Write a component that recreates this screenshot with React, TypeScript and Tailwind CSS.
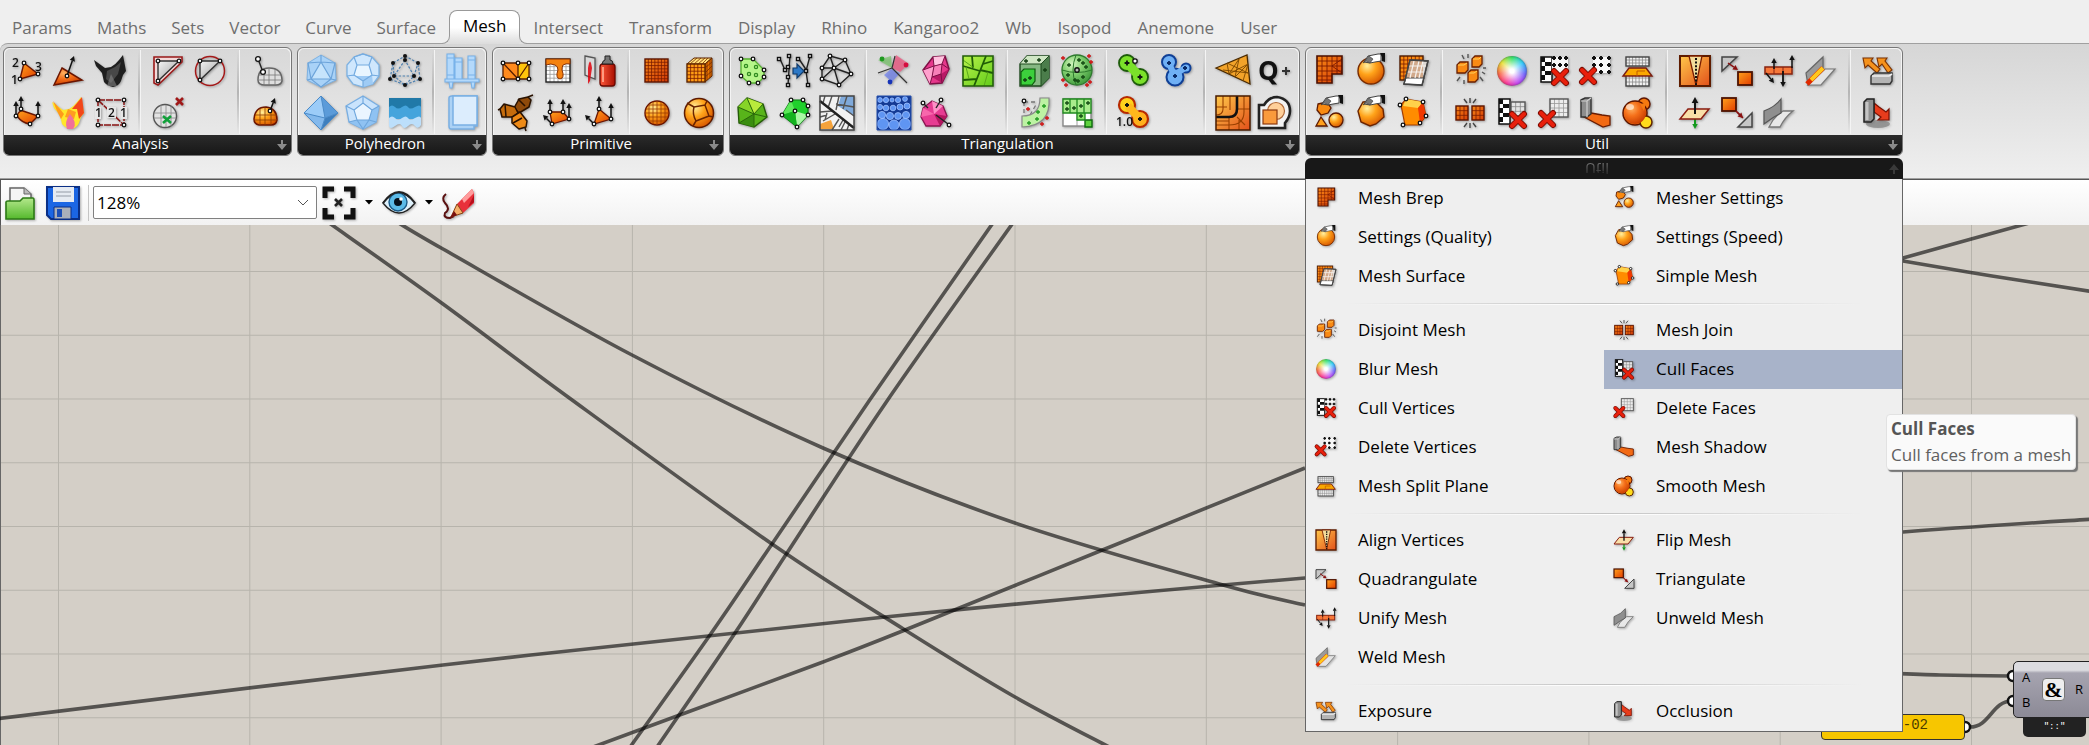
import { useState, type ReactNode } from 'react'

const TABS = [
  'Params', 'Maths', 'Sets', 'Vector', 'Curve', 'Surface', 'Mesh', 'Intersect', 'Transform',
  'Display', 'Rhino', 'Kangaroo2', 'Wb', 'Isopod', 'Anemone', 'User',
]

// ---- icon helpers, everything is drawn in a 36x36 box ----

const pts = (s: string) => s.split(' ').map((p) => p.split(',').map(Number))

function Nodes({ at, r = 1.8 }: { at: string; r?: number }) {
  return (
    <g fill="#fff" stroke="#111" strokeWidth="1.3">
      {pts(at).map(([x, y], i) => <circle key={i} cx={x} cy={y} r={r} />)}
    </g>
  )
}

function Arrow({ at, c = '#111', w = 1.5, h = 5 }: { at: string; c?: string; w?: number; h?: number }) {
  const [[x1, y1], [x2, y2]] = pts(at)
  const len = Math.hypot(x2 - x1, y2 - y1)
  const ux = (x2 - x1) / len
  const uy = (y2 - y1) / len
  const bx = x2 - ux * h
  const by = y2 - uy * h
  const k = h * 0.55
  return (
    <g>
      <path d={`M${x1} ${y1}L${bx} ${by}`} stroke={c} strokeWidth={w} />
      <path d={`M${x2} ${y2}L${bx - uy * k} ${by + ux * k}L${bx + uy * k} ${by - ux * k}Z`} fill={c} />
    </g>
  )
}

function Grid({ x, y, w, h, n, m = n, c = '#7a1c00', f = 'none', b = c, sw = 0.8 }: {
  x: number; y: number; w: number; h: number; n: number; m?: number; c?: string; f?: string; b?: string; sw?: number
}) {
  let d = ''
  for (let i = 1; i < n; i++) d += `M${x + (w * i) / n} ${y}v${h}`
  for (let i = 1; i < m; i++) d += `M${x} ${y + (h * i) / m}h${w}`
  return (
    <g>
      <rect x={x} y={y} width={w} height={h} fill={f} />
      <path d={d} stroke={c} strokeWidth={sw} />
      <rect x={x} y={y} width={w} height={h} fill="none" stroke={b} strokeWidth="1.4" />
    </g>
  )
}

function Plus({ at, c, s = 2, w = 1.3 }: { at: string; c: string; s?: number; w?: number }) {
  return <path d={pts(at).map(([x, y]) => `M${x - s} ${y}h${2 * s}M${x} ${y - s}v${2 * s}`).join('')} stroke={c} strokeWidth={w} />
}

function Cross({ x, y, s = 7 }: { x: number; y: number; s?: number }) {
  const d = `M${x - s} ${y - s}L${x + s} ${y + s}M${x + s} ${y - s}L${x - s} ${y + s}`
  return (
    <g strokeLinecap="round">
      <path d={d} stroke="#7d0a00" strokeWidth="6" />
      <path d={d} stroke="#e8200c" strokeWidth="4" />
    </g>
  )
}

const Hand = () => (
  <g>
    <path d="M11 9L15 3L25 1H28V8L22 9L17 10Z" fill="#fff" stroke="#444" />
    <path d="M10 10L16 3L20 6L17 10L13 8Z" fill="#777" stroke="#333" strokeWidth=".6" />
    <path d="M27 0H32V9L29 8V4Z" fill="#111" />
  </g>
)

const Checker = () => (
  <g>
    <rect x="5" y="4" width="11" height="25" fill="#fff" stroke="#111" strokeWidth="1.5" />
    <path d="M5 4h4v5h-4zM9 9h6v4h-6zM5 13h4v5h-4zM9 18h6v4h-6zM5 22h4v5h-4z" fill="#111" />
  </g>
)

const wolf = 'M1 7L3 13L9 20L11 29Q14 33 20 34Q26 33 28 28L30 22L33 18L30 2L26 7Q22 12 18 14L12 15Z'
const text = { fontFamily: 'Open Sans, sans-serif', fontWeight: 600, fontSize: 12, fill: '#111' }

const ICONS: Record<string, ReactNode> = {
  'Mesh Edges Order': <>
    <path d="M15 10L29 21L11 26Z" fill="url(#org)" stroke="#6b1500" strokeWidth="1.4" />
    <Nodes at="15,10 29,21 11,26" />
    <text x="3" y="14" {...text}>2</text><text x="26" y="18" {...text}>3</text><text x="2" y="31" {...text}>1</text>
  </>,
  'Face Normals': <>
    <path d="M11 15L31 27L3 32Z" fill="url(#ember)" stroke="#6b1500" strokeWidth="1.5" />
    <Arrow at="16,23 23,3" /><Nodes at="16,23" />
  </>,
  'Mesh Depth': <>
    <path d={wolf} fill="#1f1f1f" />
    <path d="M14 18L22 14L28 9L25 21L18 30L13 26Z" fill="#474747" />
    <path d="M18 21L24 33H14Z" fill="#8a8a8a" opacity=".55" />
  </>,
  'Vertex Normals': <>
    <path d="M8 21Q10 15 14 16L29 21L21 29Q13 28 8 21Z" fill="url(#org)" stroke="#6b1500" strokeWidth="1.4" />
    <Arrow at="7,21 7,6" /><Arrow at="12,14 12,1" /><Arrow at="29,21 29,6" />
    <Nodes at="7,21 12,14 29,21 21,29" />
  </>,
  'Mesh Heat': <>
    <path d={wolf} fill="#ffe62a" />
    <path d="M2 6L9 14L13 19L10 24L6 16Z" fill="#ff9a1a" />
    <path d="M31 2L33 18L28 24L26 14L21 14Z" fill="#f2471a" />
    <path d="M17 14L25 17L23 24L14 22Z" fill="#ff9c20" />
    <path d="M19 19Q27 28 22 34H16Q13 27 19 19Z" fill="#f0709a" />
  </>,
  'Face Boundaries': <>
    <path d="M5 5H31V30H5ZM5 5L31 30" fill="none" stroke="#8b1515" strokeWidth="1.5" strokeDasharray="7 1" />
    <path d="M2 12h6v12h-6zM14 12h9v11h-9zM28 12h6v12h-6z" fill="#e6e6e6" />
    <text x="2" y="22" {...text}>1</text><text x="15" y="22" {...text}>2</text><text x="27" y="22" {...text}>1</text>
    <Nodes at="5,5 31,5 31,30 5,30" />
  </>,
  'Face Edges': <>
    <path d="M4 4H32V9L8 32L4 30Z" fill="#f3d9d9" stroke="#9b1a1a" strokeWidth="1.6" />
    <path d="M8 8H29L8 28Z" fill="url(#gry)" stroke="#333" strokeWidth="1.4" />
    <Nodes at="8,8 29,8 8,28" />
  </>,
  'Face Circles': <>
    <path d="M8 8H28L8 27Z" fill="url(#gry)" stroke="#333" strokeWidth="1.4" />
    <circle cx="18" cy="18" r="14.5" fill="none" stroke="#a51a1a" strokeWidth="1.5" />
    <Nodes at="8,8 28,8 8,27" />
  </>,
  'Mesh Closest Point': <>
    <path d="M9 27Q9 15 20 15Q33 15 33 28Q32 32 27 32H16Q9 32 9 27Z" fill="#dedede" stroke="#666" strokeWidth="1.5" />
    <path d="M10 22H32M10 27H33M15 16V32M20 15V32M26 16V32" stroke="#777" strokeWidth=".8" />
    <path d="M9 6L14 19" stroke="#222" strokeWidth="1.4" /><Nodes at="9,6 14,19" r={2.4} />
  </>,
  'Mesh Inclusion': <>
    <circle cx="15" cy="21" r="11.5" fill="#e2e2e2" stroke="#555" strokeWidth="1.4" />
    <path d="M4 18H26M4 23H26M11 10V32M16 10V32M21 11V31" stroke="#888" strokeWidth=".8" />
    <path d="M13 21L21 28M21 21L13 28" stroke="#12a03a" strokeWidth="2.6" />
    <path d="M26 3L33 10M33 3L26 10" stroke="#a01818" strokeWidth="2.6" />
  </>,
  'Mesh Eval': <>
    <path d="M5 24Q6 12 17 12Q28 13 28 25Q27 30 22 30H10Q5 29 5 24Z" fill="url(#ball)" stroke="#6b1500" strokeWidth="1.5" />
    <path d="M6 20H28M5 25H28M11 14V30M16 12V30M22 14V30" stroke="#8a3a00" strokeWidth=".8" />
    <Arrow at="21,16 26,3" /><Nodes at="21,16" />
  </>,

  Icosahedron: <>
    <path d="M18 2L32 10L33 27L18 34L4 27L5 10Z" fill="#a9d2f7" stroke="#7db2e3" />
    <path d="M18 9L28 26H8Z" fill="#c6e4fc" />
    <path d="M18 2V9L5 10L8 26L4 27M18 9L32 10L28 26L33 27M8 26L18 34L28 26H8L18 9L28 26" fill="none" stroke="#6da4da" strokeWidth="1.2" />
  </>,
  Dodecahedron: <>
    <path d="M18 1L27 4L34 12V23L28 31L18 34L8 31L2 23V12L9 4Z" fill="#cfe7fd" stroke="#7db2e3" strokeWidth="1.3" />
    <path d="M12 12H24L27 22L18 28L9 22Z" fill="#e8f5ff" />
    <path d="M3 22L9 22L18 28V34L28 31L27 22L34 23" fill="#9ecbf5" />
    <path d="M12 12H24L27 22L18 28L9 22ZM12 12L9 4M24 12L27 4M27 22L34 23M18 28V34M9 22L2 23M9 4L18 1L27 4" fill="none" stroke="#74abe0" strokeWidth="1.2" />
  </>,
  'Polyhedron Vertices': <>
    <path d="M18 3L31 10L33 26L18 32L3 26L6 10ZM18 7L7 23H27ZM6 10L7 23L18 32L27 23L31 10" fill="none" stroke="#4f81b0" strokeWidth="1.2" strokeDasharray="2.5 1.5" />
    {pts('18,3 18,7 6,10 31,10 3,26 7,23 27,23 33,26 18,32').map(([x, y]) => <circle key={`${x}-${y}`} cx={x} cy={y} r="2" fill="#111" />)}
  </>,
  Octahedron: <>
    <path d="M18 1L35 18L18 35L1 18Z" fill="#9cccf8" />
    <path d="M18 1L35 18L22 23Z" fill="#5b9bd9" /><path d="M35 18L22 23L18 35Z" fill="#3f7fbd" /><path d="M1 18L22 23L18 35Z" fill="#84b9ec" />
    <path d="M18 1L22 23L18 35M1 18L22 23L35 18M18 1L35 18L18 35L1 18Z" fill="none" stroke="#4c8bc8" />
  </>,
  Polyhedron: <>
    <path d="M18 1L34 11L31 27L18 34L4 27L1 11Z" fill="#c9e3fc" stroke="#78aee2" strokeWidth="1.3" />
    <path d="M18 8L27 15L24 25H12L9 15Z" fill="#eaf5ff" />
    <path d="M12 25H24L31 27L18 34L4 27ZM27 15L34 11L31 27L24 25Z" fill="#8fc2f2" />
    <path d="M18 8L27 15L24 25H12L9 15ZM18 8V1M27 15L34 11M24 25L31 27M12 25L4 27M9 15L1 11M12 25L18 34L24 25" fill="none" stroke="#6ea6dc" strokeWidth="1.1" />
  </>,
  Waves: <>
    <path d="M2 3H34V22H2Z" fill="#2179a8" />
    <path d="M2 12Q5 9 8 12T15 12T21 12T28 12T34 12V24H2Z" fill="#45a4dc" />
    <path d="M2 23Q5 20 8 23T15 23T21 23T28 23T34 23V30Q31 35 28 31T21 31T15 31T8 31T2 31Z" fill="#bcdffb" />
  </>,
  Bookshelf: <g fill="#b4d9fb" stroke="#78b2ea" strokeWidth="1.1">
    <path d="M3 1h7v25h-7zM11 5h7v21h-7zM24 3h7v23h-7zM1 26h34v3h-34zM5 29h4l-1 6h-2zM27 29h4l-1 6h-2z" />
    <path d="M3 5h7M3 22h7M11 9h7M24 7h7M24 22h7" fill="none" />
  </g>,
  Book: <g fill="#dcedfd" stroke="#7ab0e4" strokeWidth="1.5">
    <path d="M5 3Q5 1 8 1H33V31H30V34H7Q5 34 5 31Z" fill="#acd2f5" /><path d="M9 1H33V30H9Z" />
  </g>,

  'Mesh Plane Strip': <>
    <path d="M5 10H20V26H5Z" fill="#ff8a1c" /><path d="M20 10H31V26H20Z" fill="#ffc40c" />
    <path d="M5 10H31V26H5ZM20 10V26M5 10L20 26M20 26L31 10" fill="none" stroke="#5b2000" strokeWidth="1.3" />
    <Nodes at="5,10 20,10 31,10 5,26 20,26 31,26" />
  </>,
  'Mesh Drip': <>
    <Grid x={6} y={6} w={24} h={23} n={6} f="#fff" c="#999" b="#222" />
    <path d="M6 6H30V11Q26 10 23 12Q22 14 22 17Q25 25 20 26Q15 25 18 17Q18 13 15 12Q11 10 6 12Z" fill="#f58210" stroke="#8a3000" />
  </>,
  'Mesh Spray': <>
    <path d="M3 3L13 5V26L3 22Z" fill="#d9d9d9" stroke="#555" strokeWidth="1.3" />
    <path d="M6 31V15Q8 2 10 15L8 28" fill="#e0000a" opacity=".85" />
    <rect x="18" y="11" width="15" height="22" rx="3" fill="url(#red)" stroke="#6b0800" strokeWidth="1.3" />
    <path d="M20 11Q21 7 23 7V3H28V7Q31 7 31 11Z" fill="#777" stroke="#222" />
    <path d="M21 14V29" stroke="#ff9a80" strokeWidth="2" />
  </>,
  'Mesh Plane': <Grid x={6} y={6} w={23} h={23} n={7} f="url(#deep)" b="#5e1500" />,
  'Mesh Box': <>
    <path d="M6 11L13 5H31L24 11Z" fill="#ffe07a" stroke="#5e2500" /><path d="M24 11L31 5V23L24 29Z" fill="#e77400" stroke="#5e2500" />
    <Grid x={6} y={11} w={18} h={18} n={5} f="#ff9d14" b="#5e2500" />
    <path d="M26 9V27M29 7V25M24 15L31 9M24 20L31 13M24 24L31 18M9 11L16 5M13 11L20 5M17 11L24 5M21 11L27 5" stroke="#7a2c00" strokeWidth=".8" />
  </>,
  'Mesh Pipe': <g strokeLinejoin="round" stroke="#2a1200" strokeWidth="1.5">
    <path d="M16 13L21 4L30 2L33 5L31 12L21 18Z" fill="#8f4a0a" /><path d="M2 14L6 9L17 12L20 18L15 22H4Z" fill="#c66c0c" />
    <path d="M14 22L22 17L29 26L28 32L21 34L14 28Z" fill="#ee8a16" /><path d="M30 2L35 0M2 14L0 15M27 33L28 36M20 4L27 11M7 9L8 22M15 28L24 23" />
  </g>,
  'Mesh Quad': <>
    <path d="M10 17H23L29 24L12 29Z" fill="url(#org)" stroke="#6b1500" strokeWidth="1.3" />
    <Arrow at="10,17 10,4" /><Arrow at="23,17 23,4" /><Arrow at="29,24 29,8" /><Arrow at="12,29 3,20" />
    <Nodes at="10,17 23,17 29,24 12,29" />
  </>,
  'Mesh Triangle': <>
    <path d="M17 14L29 24L12 29Z" fill="url(#org)" stroke="#6b1500" strokeWidth="1.3" />
    <Arrow at="17,14 17,1" /><Arrow at="29,24 29,8" /><Arrow at="12,29 3,20" />
    <Nodes at="17,14 29,24 12,29" />
  </>,
  'Mesh Sphere': <>
    <circle cx="18" cy="18" r="12" fill="url(#ball)" stroke="#6b1500" strokeWidth="1.4" />
    <path d="M7 14H29M6 18H30M7 22H29M10 26H26M10 10H26M14 7V29M18 6V30M22 7V29M10 10V26M26 10V26" stroke="#9a3a00" strokeWidth=".8" />
  </>,
  'Mesh Sphere Ex': <>
    <circle cx="18" cy="18" r="14.5" fill="url(#ball)" stroke="#5e1a00" strokeWidth="1.5" />
    <path d="M13 12L24 10L28 21L15 26Q11 19 13 12ZM13 12L6 8M24 10L26 6M28 21L32 22M15 26L12 31" fill="none" stroke="#6b2400" strokeWidth="1.5" />
  </>,

  'Convex Hull': <>
    <path d="M6 6H18L29 17V24L23 30H14L6 23Z" fill="#b5f58a" stroke="#55b030" strokeWidth="1.3" />
    <Nodes at="6,6 18,6 29,17 29,24 23,30 14,30 6,23" />
    <g fill="none" stroke="#2f8a20" strokeWidth="1.3">{pts('11,13 21,14 14,21 21,22').map(([x, y]) => <circle key={`${x}${y}`} cx={x} cy={y} r="1.6" />)}</g>
  </>,
  'Delaunay Edges': <>
    <path d="M3 6L8 17M13 2L11 32M8 17L12 12M22 6L30 18M33 3L29 18L31 32" stroke="#222" strokeWidth="1.4" fill="none" />
    <g fill="#fff" stroke="#111" strokeWidth="1.4">{pts('2,6 12,3 8,17 11,14 11,24 11,32 21,6 33,3 29,18 31,32').map(([x, y]) => <rect key={`${x}-${y}`} x={x - 1.5} y={y - 1.5} width="3" height="3" />)}</g>
    <path d="M16 15H20V11L27 18L20 25V21H16Z" fill="#2d79c7" stroke="#123c6b" strokeWidth="1.2" />
  </>,
  'Delaunay Mesh': <>
    <path d="M11 3L26 7L32 21L20 32L3 26V15ZM15 15L11 3M15 15L26 7M15 15L32 21M15 15L20 32M15 15L3 26M15 15H3" fill="none" stroke="#222" strokeWidth="1.4" />
    <Nodes at="11,3 26,7 32,21 20,32 3,26 3,15 15,15" />
  </>,
  'Facet Dome': <>
    <path d="M12 3L28 9L32 22L19 32L4 28L3 12Z" fill="#58b41a" stroke="#255c08" strokeWidth="1.4" />
    <path d="M12 3L28 9L19 19Z" fill="#b9ea3c" /><path d="M3 12L12 3L19 19Z" fill="#86d428" /><path d="M4 28L19 19V32Z" fill="#3a8d10" />
    <path d="M12 3L19 19L28 9M3 12L19 19L32 22M4 28L19 19V32" fill="none" stroke="#2a660a" />
  </>,
  'Octree Gem': <>
    <path d="M14 5H26L31 11V20L20 32L5 20Z" fill="#20d02c" stroke="#0a7a12" strokeWidth="1.2" />
    <path d="M18 16L31 20L20 32Z" fill="#a9f7a4" /><path d="M18 16L14 5L5 20Z" fill="#5de85a" /><path d="M18 16L5 20L20 32Z" fill="#14b31f" />
    <Nodes at="14,5 26,5 31,11 31,20 20,32 5,20 18,16" />
  </>,
  'Voronoi Map': <>
    <path d="M1 1H35V35H1Z" fill="#f2f2f2" />
    <path d="M22 1H35V21L19 11Z" fill="#7fa9da" /><path d="M1 29L12 25L15 34H1Z" fill="#f5a23a" />
    <path d="M1 6L35 33M13 1L9 13M1 17L13 16M4 26L16 19M13 35L20 24M22 35L26 27M27 15L35 21M20 1L17 15M28 1L24 14M17 9L35 12M6 1L4 8M8 18L6 25M24 25L20 32M30 29L28 35M1 22L8 20" stroke="#555" strokeWidth="1.4" />
    <path d="M1 6L35 33" stroke="#222" strokeWidth="2.4" /><path d="M1 1H35V35H1Z" fill="none" stroke="#444" strokeWidth="1.5" />
  </>,
  'Proximity Star': <>
    <path d="M16 15L2 7L15 3Z" fill="#77c86a" opacity=".7" /><path d="M16 15L20 2L33 11L24 19Z" fill="#f25580" opacity=".75" /><path d="M15 16L24 20L16 29L8 22Z" fill="#6a7cf0" opacity=".7" />
    <path d="M16 15L2 20M16 15L31 30M16 15L19 3" stroke="#333" strokeWidth="1.2" />
    <circle cx="6" cy="6" r="2.4" fill="#1f9a1f" /><circle cx="30" cy="12" r="2.4" fill="#d40d3f" /><circle cx="14" cy="29" r="2.4" fill="#1734b8" />
  </>,
  'Voronoi Gem': <>
    <path d="M15 4L27 3L31 16L24 30L12 31L5 17Z" fill="#e6388c" stroke="#7d1045" strokeWidth="1.5" />
    <path d="M15 4L27 3L24 11L16 13Z" fill="#ffc4e0" /><path d="M16 13L24 11L23 21L14 24Z" fill="#f77fb8" /><path d="M5 17L16 13L14 24L12 31Z" fill="#ffa0cd" /><path d="M23 21L31 16L24 30L14 24Z" fill="#b81a66" />
    <path d="M15 4L16 13L5 17M16 13L24 11L27 3M24 11L31 16M24 11L23 21L24 30M23 21L14 24L12 31M14 24L16 13" fill="none" stroke="#7d1045" />
  </>,
  'Voronoi Leaf': <>
    <path d="M3 3H33V33H3Z" fill="url(#leaf)" />
    <path d="M26 3L14 33M3 13L20 18M20 17L33 20M23 11L33 8M3 27L17 26M12 3L13 15" fill="none" stroke="#1f5c06" strokeWidth="1.8" />
    <path d="M3 7L14 15M28 19L24 33M6 14L9 26" stroke="#5aa81c" /><path d="M3 3H33V33H3Z" fill="none" stroke="#235f0a" strokeWidth="1.6" />
  </>,
  'Voronoi Cells': <>
    <path d="M1 1H35V35H1Z" fill="#143a94" />
    <g fill="#5f95f2" stroke="#9fc2ff" strokeWidth=".8">
      {pts('7,29,5.6 18,30,5 29,29,5.6 6,20,3.6 14,21,3.6 22,21,3.4 30,20,3.6 4,12,2.6 10,13,2.8 17,13,2.8 24,12,3 31,11,3 4,5,2.4 10,5,2.6 16,5,2 22,5,2.6 29,4,2.4').map(([x, y, r]) => <circle key={`${x}-${y}`} cx={x} cy={y} r={r} />)}
    </g>
    <path d="M1 1H35V35H1Z" fill="none" stroke="#2450b0" />
  </>,
  'Voronoi Pins': <>
    <path d="M14 6L25 11L29 21L22 31L8 31L3 22L5 13Z" fill="#e63c92" stroke="#8a1450" strokeWidth="1.3" />
    <path d="M14 6L25 11L16 19Z" fill="#ff8fc6" /><path d="M16 19L29 21L22 31Z" fill="#b3175f" /><path d="M5 13L16 19L3 22Z" fill="#f767ac" />
    <path d="M5 8L10 13M23 5L18 13M18 20L30 29" stroke="#222" strokeWidth="1.4" /><Nodes at="5,8 23,5 31,30" />
  </>,
  OcTree: <>
    <path d="M3 11L10 3H32V25L24 33H3Z" fill="#86b883" stroke="#1f4a1f" strokeWidth="1.4" />
    <path d="M3 11L10 3H32L24 11Z" fill="#cfe6c4" /><path d="M24 11L32 3V25L24 33Z" fill="#4b7d4b" /><path d="M24 11L32 3M24 11V33M3 11H24" stroke="#1f4a1f" />
    <path d="M4 19L7 16H18V28L15 32H4Z" fill="#3cd03c" stroke="#0d5c0d" strokeWidth="1.2" />
    <Plus at="8,27 13,25 9,8 22,7 28,17" c="#123c12" />
  </>,
  Proximity3D: <>
    <circle cx="18" cy="17" r="15" fill="url(#grn)" stroke="#2d7a2d" strokeWidth="1.3" />
    <path d="M17 2Q11 17 17 32M3 17Q18 22 33 17" fill="none" stroke="#2d7a2d" />
    <Plus at="10,12 9,22 16,27 24,24 27,14 20,7 24,10 19,28" c="#134a13" /><Plus at="4,5 30,3 32,9 4,27 31,29 28,32 7,32" c="#d01212" />
    <circle cx="18" cy="17" r="2.2" fill="#bbb" stroke="#111" strokeWidth="1.4" />
  </>,
  Proximity2D: <>
    <path d="M7 7H20M7 7V22M13 20L20 8" stroke="#777" strokeDasharray="4 3" strokeWidth="1.3" />
    <path d="M23 3H32Q34 31 5 32V21Q23 21 23 3Z" fill="#bdf2a3" stroke="#888" strokeWidth="1.2" />
    <Plus at="11,14 30,23 25,29" c="#d01212" /><Plus at="12,28 20,24 21,17 27,11" c="#1f9a1f" /><Nodes at="7,6" />
  </>,
  QuadTree: <>
    <Grid x={4} y={4} w={28} h={27} n={2} f="#fff" c="#888" b="#888" />
    <path d="M4 4H32V18H4Z" fill="#a9eb8c" /><path d="M18 18H26V25H18Z" fill="#8be36a" /><path d="M26 25H33V32H26Z" fill="#5fd33f" stroke="#0d6b0d" strokeWidth="1.4" />
    <path d="M4 4H32V18H4ZM18 4V25H26V18M11 4V18M25 4V18" fill="none" stroke="#1f8a1f" strokeWidth="1.3" />
    <Plus at="8,8 8,14 15,13 22,11 29,8 22,21" c="#134a13" />
  </>,
  'MetaBall Green': <>
    <g fill="#7be02a" stroke="#1d5c0a" strokeWidth="1.8"><circle cx="11" cy="10" r="8" /><circle cx="24" cy="24" r="8" /></g>
    <path d="M12 11L23 23" stroke="#7be02a" strokeWidth="9" /><Plus at="11,10 24,24" c="#111" s={2.4} w={1.8} /><Nodes at="19,8" r={2.2} />
  </>,
  'MetaBall Blue': <>
    <g fill="#6fb0f5" stroke="#0f3f96" strokeWidth="2"><circle cx="11" cy="9" r="7" /><circle cx="28" cy="15" r="4.5" /><circle cx="17" cy="24" r="8.5" /></g>
    <path d="M11 10L16 22L27 15" fill="none" stroke="#6fb0f5" strokeWidth="6" /><Plus at="11,10 17,23 27,15" c="#0a2a66" w={1.8} />
  </>,
  'MetaBall Orange': <>
    <g stroke="#b82a00" strokeWidth="2.2"><circle cx="11" cy="10" r="8" fill="#ffd21c" /><circle cx="24" cy="24" r="8" fill="#ffb01c" /></g>
    <path d="M12 11L23 23" stroke="#ffb81c" strokeWidth="8" /><Plus at="11,10 24,24" c="#111" w={1.8} /><text x="0" y="31" {...text}>1.0</text>
  </>,
  'Substrate Triangle': <>
    <path d="M1 15L32 2L35 31Z" fill="#f2a32a" stroke="#4a2a00" strokeWidth="1.3" />
    <path d="M12 10L14 21L24 6L20 24L33 11L28 28M8 17L34 20M12 10L33 20M14 21L33 11" fill="none" stroke="#7a4600" strokeWidth=".9" />
  </>,
  'Quad Plus': <>
    <text x="1" y="27" fontFamily="Open Sans, sans-serif" fontWeight="700" fontSize="26" fill="#111">Q</text><Plus at="29,18" c="#333" s={4} w={2} />
  </>,
  'Quad Curve': <>
    <path d="M1 1H35V35H1Z" fill="url(#quad)" /><path d="M8 1V14Q8 20 1 20M15 1V15M29 1V17Q29 30 14 30H1M1 12H12M14 22V35M22 22L30 30M1 26H14M22 14H35M24 25V35" fill="none" stroke="#9a4000" strokeWidth="1.1" />
    <path d="M22 1V14Q22 22 14 22H1" fill="none" stroke="#111" strokeWidth="2.6" /><path d="M1 1H35V35H1Z" fill="none" stroke="#4a1c00" strokeWidth="1.5" />
  </>,
  'Shape Hull': <>
    <path d="M2 10H7Q12 2 20 2Q33 4 33 16Q33 22 28 28V33H2Z" fill="#f2f2f2" stroke="#222" strokeWidth="2.6" />
    <circle cx="19" cy="16" r="8.5" fill="#ffd09a" stroke="#b06a3a" strokeWidth="1.2" /><rect x="6" y="15" width="14" height="14" fill="#f99a3c" stroke="#8a3a10" strokeWidth="1.2" />
  </>,

  'Mesh Brep': <>
    <path d="M6 3H31V21H21V30H6Z" fill="url(#deep)" /><path d="M11 3V30M16 3V30M21 3V21M26 3V21M6 8H31M6 13H31M6 18H31M6 23H21M6 27H21M21 13L31 6M21 13L31 20" stroke="#7a1800" strokeWidth=".9" />
    <path d="M6 3H31V21H21V30H6Z" fill="none" stroke="#4e1000" strokeWidth="1.6" />
  </>,
  'Settings (Quality)': <><circle cx="18" cy="18" r="13" fill="url(#ball)" stroke="#7a2c00" strokeWidth="1.4" /><Hand /></>,
  'Mesh Surface': <>
    <Grid x={5} y={3} w={23} h={24} n={6} f="#f98a10" b="#4e1a00" />
    <path d="M15 7L33 8L27 32L9 31Z" fill="#dcd8d4" stroke="#444" strokeWidth="1.4" /><path d="M15 7H28V25H11Z" fill="#c98a5a" opacity=".6" /><path d="M11 25H29L27 32L9 31Z" fill="#fff" stroke="#444" />
    <path d="M19 8L15 25M24 8L20 25M28 8L24 25M13 13H31M12 19H30" stroke="#f6f2ee" strokeWidth="1.2" /><path d="M15 7L33 8L27 32L9 31Z" stroke="#444" strokeWidth="1.4" />
  </>,
  'Mesher Settings': <>
    <path d="M7 9L16 7L20 13L17 18L10 20L6 15Z" fill="#f98a10" stroke="#5e1a00" strokeWidth="1.3" /><path d="M10 22L16 31H5Z" fill="#ffa01c" stroke="#5e1a00" strokeWidth="1.3" />
    <circle cx="25" cy="25" r="7" fill="url(#ball)" stroke="#5e1a00" strokeWidth="1.3" /><Hand />
  </>,
  'Settings (Speed)': <><path d="M10 7L22 6L30 14L31 22L23 29L17 31L8 27L5 16Z" fill="url(#ball)" stroke="#6b2400" strokeWidth="1.4" /><Hand /></>,
  'Simple Mesh': <>
    <path d="M11 4L28 7L31 21L24 30H10L6 10Z" fill="#ff8c00" stroke="#a03c00" strokeWidth="1.2" /><path d="M11 4L28 7L23 13L8 11Z" fill="#ffd24a" /><path d="M23 13L28 7L31 21L25 28Z" fill="#f03800" />
    <Nodes at="11,4 28,7 31,21 25,28 8,30 5,10" />
  </>,
  'Disjoint Mesh': <>
    <g fill="#f98a14" stroke="#6b2000" strokeWidth="1.3"><path d="M20 6L23 3H30V11L27 14H20ZM5 12L8 9H16V17L13 20H5ZM16 20L19 17H26V26L23 29H16Z" /></g>
    <path d="M21 6H27L29 4M6 12H12L15 10M17 20H22L25 18" stroke="#ffd25a" fill="none" /><path d="M10 2L12 6M16 1V5M31 15H34M30 19L33 21M5 28L8 24M12 31V27M28 24L31 28" stroke="#555" strokeWidth="1.4" />
  </>,
  'Mesh Join': <>
    <Grid x={4} y={11} w={12} h={14} n={3} f="url(#deep)" b="#5e1500" /><Grid x={20} y={11} w={12} h={14} n={3} f="url(#deep)" b="#5e1500" />
    <path d="M18 3V8M12 4L15 8M24 4L21 8M18 33V28M12 32L15 28M24 32L21 28" stroke="#444" strokeWidth="1.4" />
  </>,
  'Blur Mesh': <foreignObject x="3" y="3" width="30" height="30"><div className="size-full rounded-full bg-[radial-gradient(circle,#fff_10%,#ffffff00_65%),conic-gradient(#30e060,#28c8f8,#6a5cf8,#c040f0,#f83090,#f86040,#e8e030,#30e060)] shadow-[inset_0_0_2px_#555]" /></foreignObject>,
  'Cull Faces': <><Checker /><Grid x={17} y={7} w={14} h={14} n={3} f="#e4e4e4" c="#888" b="#555" /><Cross x={24} y={25} s={6} /></>,
  'Cull Vertices': <><Checker /><path d="M16 4H32V20H16Z" fill="#f6f6f6" /><Plus at="18,5 24,5 30,5 18,12 24,12 30,12 30,19 18,19" c="#111" w={2} /><Cross x={24} y={24} s={6} /></>,
  'Delete Faces': <><Grid x={14} y={4} w={18} h={18} n={4} f="#ececec" c="#999" b="#555" /><Cross x={11} y={24} s={6} /></>,
  'Delete Vertices': <><path d="M15 4H32V20H15Z" fill="#f8f8f8" /><Plus at="16,5 23,5 31,5 16,12 23,12 31,12 23,19 31,19" c="#111" w={2} /><Cross x={10} y={23} s={6} /></>,
  'Mesh Shadow': <>
    <path d="M13 18L24 20L32 21V30L25 32L6 22Z" fill="#f26a14" stroke="#6b1c00" strokeWidth="1.3" />
    <path d="M3 5L7 3H13V19L9 22H3Z" fill="#8d8d8d" stroke="#333" strokeWidth="1.4" /><path d="M3 6H9L13 3M9 6V22" fill="none" stroke="#d0d0d0" strokeWidth="1.2" />
  </>,
  'Mesh Split Plane': <>
    <Grid x={6} y={4} w={23} h={9} n={7} m={3} f="#f2f2f2" c="#888" b="#444" /><Grid x={6} y={21} w={23} h={12} n={7} m={3} f="#f2f2f2" c="#888" b="#444" />
    <path d="M9 15H26L32 23H3Z" fill="#fba800" stroke="#7a1c10" strokeWidth="1.4" /><path d="M17 23V18H25" fill="none" stroke="#c05a00" />
  </>,
  'Smooth Mesh': <>
    <g fill="#f67a10" stroke="#5e1500" strokeWidth="1.5"><circle cx="24" cy="9" r="6" /><circle cx="15" cy="18" r="12" /></g><circle cx="26" cy="27" r="6" fill="#ffdc1c" stroke="#5e2500" strokeWidth="1.5" />
    <circle cx="15" cy="18" r="11" fill="url(#ember)" /><path d="M20 9L26 8L24 16Z" fill="#f67a10" /><ellipse cx="10" cy="12" rx="4" ry="3" fill="#fff" opacity=".6" />
  </>,
  'Align Vertices': <>
    <path d="M3 3H33V33H3Z" fill="url(#quad)" stroke="#5e1c00" strokeWidth="2" /><path d="M12 3H25L19 32Z" fill="#f3dc9a" stroke="#7a1c00" strokeWidth="1.3" />
    <path d="M19 5V32" stroke="#111" strokeWidth="2" strokeDasharray="2 1.6" />
  </>,
  'Flip Mesh': <><Arrow at="18,22 18,34" c="#149a1e" w={2} h={5} /><path d="M11 14H32L24 24H3Z" fill="#f9dfa8" stroke="#8a1c10" strokeWidth="1.5" /><Arrow at="18,19 18,2" w={2} h={6} /></>,
  Quadrangulate: <>
    <path d="M3 4H18L3 18Z" fill="#c6c6c6" stroke="#444" strokeWidth="1.5" /><Arrow at="9,10 19,17" c="#8a1010" /><rect x="19" y="19" width="14" height="13" fill="url(#org)" stroke="#4e1200" strokeWidth="1.8" />
  </>,
  Triangulate: <>
    <rect x="3" y="3" width="14" height="13" fill="url(#org)" stroke="#4e1200" strokeWidth="1.8" /><path d="M17 16L24 23" stroke="#8a1010" strokeWidth="1.4" /><Arrow at="18,17 24,23" c="#8a1010" />
    <path d="M33 18V32H19Z" fill="#c6c6c6" stroke="#444" strokeWidth="1.5" />
  </>,
  'Unify Mesh': <>
    <rect x="4" y="14" width="27" height="7" fill="#f6783a" stroke="#8a2410" strokeWidth="1.5" /><path d="M13 14V21M22 14V21" stroke="#8a2410" />
    <Arrow at="13,16 13,5" /><Arrow at="31,15 31,2" /><Arrow at="22,18 22,34" w={1.8} /><Arrow at="5,20 13,30" />
  </>,
  'Weld Mesh': <>
    <path d="M3 20L20 4V16L5 32Z" fill="#9a9a9a" stroke="#666" strokeWidth="1.2" /><path d="M5 32L22 16H32L18 32Z" fill="#e4e4e4" stroke="#777" strokeWidth="1.2" />
    <path d="M4 31L20 15" stroke="#e02a00" strokeWidth="5" /><path d="M8 27L20 15" stroke="#ffc81c" strokeWidth="4" />
  </>,
  'Unweld Mesh': <>
    <path d="M12 25Q16 20 22 16H32Q24 22 19 32H8Z" fill="#e8e8e8" stroke="#777" strokeWidth="1.3" />
    <path d="M3 16Q14 12 20 4V18Q12 22 3 29Z" fill="#8f8f8f" stroke="#555" strokeWidth="1.2" />
  </>,
  Exposure: <>
    <g fill="#f5921c" stroke="#7a3000" strokeWidth="1.1"><path d="M3 5H13L11 8L20 16L17 20L8 12L5 15ZM17 5H27L25 8L32 17L28 20L22 11L19 14Z" /></g>
    <path d="M11 23L14 20H32V28L30 31H11Z" fill="#b4b4b4" stroke="#333" strokeWidth="1.4" /><path d="M12 23H29L32 21" stroke="#eee" fill="none" strokeWidth="1.6" />
  </>,
  Occlusion: <>
    <ellipse cx="18" cy="29" rx="12" ry="4" fill="#555" opacity=".45" />
    <path d="M14 8L19 12L26 17L29 14V25H18L21 22L14 17Z" fill="#e83c1c" stroke="#7a1000" strokeWidth="1.2" />
    <path d="M4 7L7 4H14V24L11 27H4Z" fill="#8f8f8f" stroke="#222" strokeWidth="1.5" /><path d="M7 7V25" stroke="#c4c4c4" strokeWidth="3" />
  </>,

  Open: <>
    <path d="M8 3H22L29 9V30H8Z" fill="#f4f4f4" stroke="#666" strokeWidth="1.5" /><path d="M22 3V9H29" fill="#bbb" stroke="#666" />
    <path d="M4 17Q4 16 6 16H18L21 13H31Q32 13 32 15V34H4Z" fill="url(#leafV)" stroke="#2c7a16" strokeWidth="1.6" />
  </>,
  Save: <>
    <path d="M2 2H34V34H6L2 30Z" fill="#1b66e4" stroke="#0a2f86" strokeWidth="2" /><path d="M8 2H29V17H8Z" fill="#e6ebf2" /><path d="M11 7H26M11 11H26" stroke="#b0b6c0" strokeWidth="1.4" />
    <path d="M9 22H26V34H9Z" fill="#aab0ba" stroke="#0a2f86" /><path d="M12 24H17V32H12Z" fill="#1b4fb8" />
  </>,
  'Zoom Extents': <>
    <path d="M4 13V4H13M23 4H32V13M32 23V32H23M13 32H4V23" fill="none" stroke="#111" strokeWidth="5" /><path d="M14 14L21 21M21 14L14 21" stroke="#222" strokeWidth="2.6" />
  </>,
  Preview: <>
    <path d="M2 18Q10 8 18 8T34 18Q26 28 18 28T2 18Z" fill="#dff1fb" stroke="#222" strokeWidth="1.4" /><circle cx="17" cy="17" r="9" fill="#5cbbe8" stroke="#1a5a86" strokeWidth="1.4" />
    <circle cx="17" cy="17" r="4" fill="#06111c" /><circle cx="20" cy="14" r="1.8" fill="#fff" /><path d="M2 18Q10 7 18 7T34 18" fill="none" stroke="#222" strokeWidth="2" />
  </>,
  Sketch: <>
    <path d="M5 9Q0 13 4 18Q10 24 4 28Q2 33 9 33L13 31" fill="none" stroke="#5a1010" strokeWidth="2" />
    <path d="M16 19L31 4L33 8V18L22 28Z" fill="#e8303a" /><path d="M21 14L31 4L33 8L23 18Z" fill="#ff9c9c" /><path d="M27 22L33 17V10Z" fill="#b80f1c" />
    <path d="M16 19L22 28L10 32Z" fill="#f5b06a" stroke="#8a4010" /><path d="M13 26L16 30L9 33Z" fill="#7a1010" />
  </>,
}

const Icon = ({ name, size = 'size-9' }: { name: string; size?: string }) => (
  <svg viewBox="0 0 36 36" fill="none" aria-hidden="true" className={`${size} overflow-visible drop-shadow-[1px_1px_1px_rgba(0,0,0,0.3)]`}>
    {ICONS[name]}
  </svg>
)

function Gradients() {
  const lin = (id: string, a: string, b: string, y = 1, x = 1) => (
    <linearGradient id={id} x1="0" y1="0" x2={x} y2={y}><stop stopColor={a} /><stop offset="1" stopColor={b} /></linearGradient>
  )
  const rad = (id: string, a: string, b: string, c: string) => (
    <radialGradient id={id} cx=".35" cy=".3" r=".75"><stop stopColor={a} /><stop offset=".45" stopColor={b} /><stop offset="1" stopColor={c} /></radialGradient>
  )
  return (
    <svg className="absolute size-0" aria-hidden="true">
      <defs>
        {lin('org', '#ffa21c', '#e23c00')}{lin('deep', '#f98a14', '#d43a08')}{lin('gry', '#f4f4f4', '#9c9c9c')}
        {lin('red', '#ff5a3c', '#a80e00', 0)}{lin('leaf', '#b8f24a', '#62cc1a')}{lin('quad', '#ffc84a', '#e2501a')}
        {lin('leafV', '#b4e88c', '#54b82c', 1, 0)}
        {rad('ball', '#fff0a0', '#ffa31a', '#d65600')}{rad('grn', '#d4f5c0', '#82cf70', '#3f9a3c')}{rad('ember', '#ffb060', '#f5701a', '#c83c00')}
      </defs>
    </svg>
  )
}

// ---- ribbon ----

// Each group is a list of columns: [top, bottom]
type Column = [string, string?]

const PANELS: { title: string; groups: Column[][] }[] = [
  {
    title: 'Analysis',
    groups: [
      [['Mesh Edges Order', 'Vertex Normals'], ['Face Normals', 'Mesh Heat'], ['Mesh Depth', 'Face Boundaries']],
      [['Face Edges', 'Mesh Inclusion'], ['Face Circles']],
      [['Mesh Closest Point', 'Mesh Eval']],
    ],
  },
  {
    title: 'Polyhedron',
    groups: [
      [['Icosahedron', 'Octahedron'], ['Dodecahedron', 'Polyhedron'], ['Polyhedron Vertices', 'Waves']],
      [['Bookshelf', 'Book']],
    ],
  },
  {
    title: 'Primitive',
    groups: [
      [['Mesh Plane Strip', 'Mesh Pipe'], ['Mesh Drip', 'Mesh Quad'], ['Mesh Spray', 'Mesh Triangle']],
      [['Mesh Plane', 'Mesh Sphere'], ['Mesh Box', 'Mesh Sphere Ex']],
    ],
  },
  {
    title: 'Triangulation',
    groups: [
      [['Convex Hull', 'Facet Dome'], ['Delaunay Edges', 'Octree Gem'], ['Delaunay Mesh', 'Voronoi Map']],
      [['Proximity Star', 'Voronoi Cells'], ['Voronoi Gem', 'Voronoi Pins'], ['Voronoi Leaf']],
      [['OcTree', 'Proximity2D'], ['Proximity3D', 'QuadTree']],
      [['MetaBall Green', 'MetaBall Orange'], ['MetaBall Blue']],
      [['Substrate Triangle', 'Quad Curve'], ['Quad Plus', 'Shape Hull']],
    ],
  },
]

const UTIL: Column[][] = [
  [['Mesh Brep', 'Mesher Settings'], ['Settings (Quality)', 'Settings (Speed)'], ['Mesh Surface', 'Simple Mesh']],
  [
    ['Disjoint Mesh', 'Mesh Join'], ['Blur Mesh', 'Cull Faces'], ['Cull Vertices', 'Delete Faces'],
    ['Delete Vertices', 'Mesh Shadow'], ['Mesh Split Plane', 'Smooth Mesh'],
  ],
  [['Align Vertices', 'Flip Mesh'], ['Quadrangulate', 'Triangulate'], ['Unify Mesh', 'Unweld Mesh'], ['Weld Mesh']],
  [['Exposure', 'Occlusion']],
]

const DownArrow = ({ className }: { className: string }) => (
  <svg viewBox="0 0 10 12" className={`h-3 w-2.5 ${className}`} aria-hidden="true">
    <path d="M4 1H6V5H10L5 11L0 5H4Z" fill="currentColor" />
  </svg>
)

function Panel({ title, groups, open, onToggle }: { title: string; groups: Column[][]; open?: boolean; onToggle?: () => void }) {
  return (
    <section className="overflow-hidden rounded-md border border-[#777] bg-linear-to-b from-[#d8d8d8] to-[#ececec]">
      <div className="flex rounded-t-md border-x border-t border-[#f4f4f4] py-px pr-0.5 pl-px">
        {groups.map((cols, g) => (
          <div key={g} className="flex">
            {g > 0 && <div className="mx-[6px] w-[3px] border-r border-[#f4f4f4] bg-linear-to-b from-transparent via-[#b5b5b5] to-transparent bg-size-[2px_100%] bg-no-repeat" />}
            {cols.map((col, i) => (
              <div key={i} className="flex w-[42px] flex-col">
                {col.map((name) => name && (
                  <button key={name} title={name} aria-label={name} className="flex size-[42px] items-center justify-center">
                    <Icon name={name} />
                  </button>
                ))}
              </div>
            ))}
          </div>
        ))}
      </div>
      <button onClick={onToggle} aria-expanded={open} className="flex h-5 w-full items-center bg-linear-to-b from-[#2b2b2b] to-[#171717] pr-1 text-[15px] leading-5 text-white">
        <span className="-mt-1 flex-1">{title}</span>
        <DownArrow className="text-[#8a8a8a]" />
      </button>
    </section>
  )
}

function MenuItem({ name, active, onHover }: { name: string; active: boolean; onHover: () => void }) {
  return (
    <div className="relative">
      <button
        role="menuitem"
        onMouseEnter={onHover}
        className={`flex h-[39px] w-full items-center gap-5 pb-px pl-2 text-left text-[17px] text-black ${active ? 'bg-[#a8b3c9]' : ''}`}
      >
        <Icon name={name} size="size-6" />
        <span>{name}</span>
      </button>
      {active && name === 'Cull Faces' && (
        <div role="tooltip" className="absolute top-[64px] left-[282px] z-10 rounded-[4px] border border-[#e2e2e2] bg-[#fafafa] px-1 py-px text-[17px] leading-[26px] whitespace-nowrap text-[#606060] shadow-[2px_2px_1px_#777]">
          <div className="font-bold text-[#555]">Cull Faces</div>
          <div>Cull faces from a mesh</div>
        </div>
      )}
    </div>
  )
}

function UtilMenu() {
  const [active, setActive] = useState('Cull Faces')
  return (
    <div className="absolute inset-x-0 top-full z-20 mt-0.5">
      <div className="flex h-[21px] items-center rounded-t-md bg-[#181818] pr-1 text-center text-[15px]">
        <span aria-hidden="true" className="flex-1 -scale-y-100 bg-linear-to-b from-[#181818] to-[#8a8a8a] bg-clip-text leading-5 text-transparent">Util</span>
        <DownArrow className="rotate-180 text-[#3a3a3a]" />
      </div>
      <div role="menu" aria-label="Util" className="border-x border-b border-[#666] bg-[#efefef]">
        {UTIL.map((rows, g) => (
          <div key={g}>
            {g > 0 && (
              <div className="mx-10 mt-[7px] mb-[6px]">
                <div className="h-px bg-linear-to-r from-transparent via-[#c4c4c4] to-transparent" />
                <div className="h-px bg-linear-to-r from-transparent via-white to-transparent" />
              </div>
            )}
            {rows.map((row) => (
              <div key={row[0]} className="grid grid-cols-2">
                {row.map((name) => name && (
                  <MenuItem key={name} name={name} active={active === name} onHover={() => setActive(name)} />
                ))}
              </div>
            ))}
          </div>
        ))}
      </div>
    </div>
  )
}

function TabStrip({ tab, onSelect }: { tab: string; onSelect: (t: string) => void }) {
  return (
    <nav role="tablist" className="flex h-[43px] items-end bg-[#efefef] text-[17px] text-[#6e6e6e]">
      {TABS.map((t) =>
        t === tab ? (
          <button
            key={t}
            role="tab"
            aria-selected="true"
            className="relative z-10 -mb-px h-[34px] rounded-t-lg border-x border-t border-[#999] bg-linear-to-b from-white from-50% to-[#dcdcdc] px-[13px] pb-1 text-black"
          >
            {t}
            <span className="absolute bottom-0 -left-2 size-2 overflow-hidden bg-[#e0e0e0]">
              <span className="block size-full rounded-br-lg border-r border-b border-[#999] bg-[#efefef]" />
            </span>
            <span className="absolute -right-2 bottom-0 size-2 overflow-hidden bg-[#e0e0e0]">
              <span className="block size-full rounded-bl-lg border-b border-l border-[#999] bg-[#efefef]" />
            </span>
          </button>
        ) : (
          <button key={t} role="tab" aria-selected="false" onClick={() => onSelect(t)} className="h-[34px] pt-1 pr-[13px] pl-3 nth-[n+8]:pl-[13px]">
            {t}
          </button>
        ),
      )}
    </nav>
  )
}

// ---- toolbar above the canvas ----

const Caret = () => (
  <svg viewBox="0 0 8 5" className="h-[5px] w-2" aria-hidden="true"><path d="M0 0H8L4 4.500Z" fill="#000" /></svg>
)

function Toolbar() {
  const [zoom, setZoom] = useState('128%')
  return (
    <div className="flex h-[46px] items-center border-t border-l border-[#555] bg-linear-to-b from-white to-[#f2f2f2] pl-px">
      <button aria-label="Open"><Icon name="Open" /></button>
      <button aria-label="Save" className="ml-[7px]"><Icon name="Save" /></button>
      <div className="mr-1 ml-[7px] h-9 w-px bg-[#c4c4c4]" />
      <div className="relative">
        <select
          aria-label="Zoom"
          value={zoom}
          onChange={(e) => setZoom(e.target.value)}
          className="h-[33px] w-[224px] appearance-none rounded-xs border border-[#808080] bg-white pl-[3px] text-[17px] text-black"
        >
          {['50%', '100%', '128%', '150%', '200%'].map((z) => <option key={z}>{z}</option>)}
        </select>
        <svg viewBox="0 0 12 7" className="pointer-events-none absolute top-[13px] right-2 h-[7px] w-3" aria-hidden="true">
          <path d="M1 1L6 6L11 1" fill="none" stroke="#555" />
        </svg>
      </div>
      <button aria-label="Zoom Extents" className="ml-1"><Icon name="Zoom Extents" /></button>
      <button aria-label="Zoom options" className="px-2"><Caret /></button>
      <button aria-label="Preview"><Icon name="Preview" /></button>
      <button aria-label="Preview options" className="px-2"><Caret /></button>
      <button aria-label="Sketch"><Icon name="Sketch" /></button>
    </div>
  )
}

// ---- canvas ----

// Smooth path through the given points
function wire(s: string) {
  const p = pts(s)
  let d = `M${p[0].join(' ')}`
  for (let i = 0; i < p.length - 1; i++) {
    const a = p[i - 1] ?? p[i]
    const b = p[i]
    const c = p[i + 1]
    const e = p[i + 2] ?? c
    d += `C${b[0] + (c[0] - a[0]) / 6} ${b[1] + (c[1] - a[1]) / 6} ${c[0] - (e[0] - b[0]) / 6} ${c[1] - (e[1] - b[1]) / 6} ${c[0]} ${c[1]}`
  }
  return d
}

const WIRES = [
  '325,-5 443,79 568,172 772,319 905,405 1015,472 1115,525',
  '394,-5 443,24 632,130 823,223 1015,298 1223,360 1305,380',
  '995,-5 869,176 772,319 710,410 628,525',
  '1015,-5 887,176 787,328 735,408 655,525',
  '-5,494 443,440 885,392 1305,353 1903,307 2095,294',
  '585,525 677,491 823,437 905,405 1100,326 1305,243',
  '1880,39 1903,33 2040,-5',
  '1880,33 1903,36 1992,51 2095,67',
  '1880,448 1940,450 2010,451',
]

function Canvas() {
  return (
    <main className="relative min-h-[400px] flex-1 overflow-hidden bg-[#d4cfc7]">
      <svg className="absolute inset-0 size-full" aria-hidden="true">
        <defs>
          <pattern id="grid" width="191.3" height="63.75" x="58" y="46" patternUnits="userSpaceOnUse">
            <path d="M0.5 0V64M0 0.5H192" stroke="#b7b4ac" />
          </pattern>
        </defs>
        <rect width="100%" height="100%" fill="url(#grid)" />
        <rect width="1" height="100%" fill="#666" />
        <g fill="none" stroke="#000" strokeOpacity=".6" strokeWidth="3.6">
          {WIRES.map((w) => <path key={w} d={wire(w)} />)}
          <path d="M1970 502C1990 502 1992 476 2012 476" />
        </g>
        <g fill="#fff" stroke="#111" strokeWidth="2.5">
          <circle cx="2013" cy="451" r="5" /><circle cx="2013" cy="476" r="5" /><circle cx="1965" cy="502" r="5" />
        </g>
      </svg>
      <div className="absolute top-[489px] left-[1821px] h-[26px] w-36 rounded-[4px] border border-[#333] bg-[#f7c600] pr-9 text-right font-['Liberation_Mono',monospace] text-[14px] leading-[20px] text-[#4a3b00]">
        -02
      </div>
      <div className="absolute top-[436px] left-[2013px] flex h-[57px] w-[84px] items-center rounded-[5px] border border-[#222] bg-linear-to-b from-[#dcdce0] from-15% via-[#a6a4b0] via-20% to-[#8c8a96] pl-2 text-[13px] text-black">
        <div className="flex w-5 flex-col leading-[25px]"><span>A</span><span>B</span></div>
        <div className="flex size-[23px] items-center justify-center rounded-[4px] border border-[#777] bg-[#eee] font-['Liberation_Serif',serif] text-[22px] leading-none font-bold">&amp;</div>
        <span className="ml-2.5">R</span>
      </div>
      <div className="absolute top-[493px] left-[2023px] h-[19px] w-[63px] rounded-b-[5px] bg-[#222] text-center font-['Liberation_Mono',monospace] text-[9px] leading-[18px] text-white">
        "::"
      </div>
    </main>
  )
}

export default function App() {
  const [tab, setTab] = useState('Mesh')
  const [open, setOpen] = useState(true)

  return (
    <div className="flex min-h-screen flex-col overflow-hidden bg-[#efefef] font-['Open_Sans','Noto_Sans',sans-serif]">
      <Gradients />
      <TabStrip tab={tab} onSelect={setTab} />
      <div className="flex items-start gap-[5px] rounded-tl-lg border-t border-b border-[#a0a0a0] bg-linear-to-b from-[#d6d6d6] to-[#efefef] px-[3px] pt-[3px] pb-[22px]">
        {PANELS.map((p) => <Panel key={p.title} {...p} />)}
        <div className="relative">
          <Panel title="Util" groups={UTIL} open={open} onToggle={() => setOpen(!open)} />
          {open && <UtilMenu />}
        </div>
      </div>
      <div className="flex flex-1 flex-col">
        <Toolbar />
        <Canvas />
      </div>
    </div>
  )
}
